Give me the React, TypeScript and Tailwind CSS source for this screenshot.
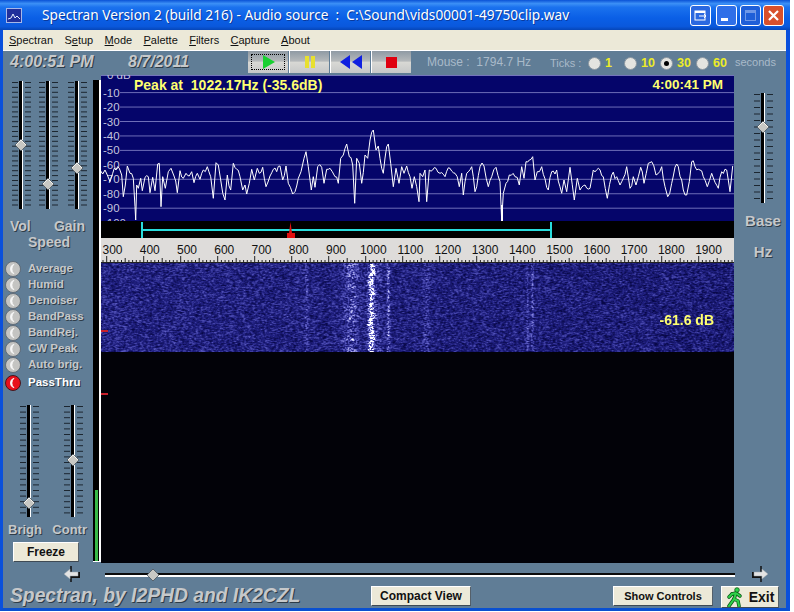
import * as React from "react";

// eyeballed trace points, [x, y] in absolute page pixels
const leftTrace = [0,300,8,312,15,300,22,315,30,335,38,310,48,300,58,295,65,315,70,380,76,345,82,288,90,310,100,325,105,410,107,450,110,345,115,355,122,325,127,362,135,322,145,320,150,368,158,322,165,362,173,282,178,280,183,410,188,320,196,355,205,305,213,295,222,318,232,368,240,302,250,325,258,310,268,318,275,305,282,338,292,310,300,328,310,300,322,290,332,320,340,385,348,278,355,285,362,330,375,390,382,315,392,360,400,280,410,298,420,320,428,360,435,345,440,372,448,340,455,298,463,330,472,295,478,310,488,292,498,350,510,318,520,298,530,305,540,288,548,330,558,288,565,340,578,372,585,365,595,325,603,305,612,265,618,245,625,290,634,360,640,320,645,352,653,290,665,292,672,340,680,298,690,295,697,305,705,320,715,340,722,265,730,255,740,222,748,260,758,285,764,400,770,265,778,280,785,340,795,255,803,265,810,210,820,180,828,240,835,228,845,295,850,310,860,230,865,222,872,280,880,350,888,295,897,340,905,290,912,310,920,288,930,320,936,355,943,320,950,350,957,395];
const rightTrace = [0,310,8,320,15,300,20,395,28,300,38,300,48,295,60,310,75,320,90,295,105,310,118,350,125,310,130,375,140,310,155,290,165,365,180,290,192,288,205,350,215,320,228,292,240,335,245,452,250,370,258,340,268,315,285,320,298,345,305,290,312,325,318,275,328,270,338,260,345,330,352,305,365,290,385,360,395,305,410,300,425,370,432,330,440,365,450,292,463,390,472,325,480,360,495,345,510,355,520,300,535,295,550,320,562,385,575,315,590,320,600,345,620,290,630,355,640,320,648,345,662,292,672,340,685,280,695,275,708,315,725,290,735,350,743,380,755,340,770,282,785,330,790,360,800,375,808,335,815,275,825,290,840,300,850,320,862,350,875,310,895,355,905,305,920,300,930,365,938,288];

function tracePoints() {
  const raw: [number, number][] = [];
  for (let i = 0; i < leftTrace.length; i += 2) raw.push([leftTrace[i] / 3 - 1, leftTrace[i + 1] / 3 - 5]);
  for (let i = 0; i < rightTrace.length; i += 2) raw.push([rightTrace[i] / 3 + 319, rightTrace[i + 1] / 3 - 5]);
  // the real trace is denser than the hand-read points, so add small wiggles between them
  let seed = 77;
  const rnd = () => {
    seed = (seed * 16807) % 2147483647;
    return seed / 2147483647;
  };
  const out: string[] = [];
  raw.forEach(([x, y], i) => {
    out.push(`${x.toFixed(1)},${y.toFixed(1)}`);
    const next = raw[i + 1];
    if (!next) return;
    const steps = Math.floor((next[0] - x) / 1.6);
    for (let s = 1; s < steps; s++) {
      const f = s / steps;
      const py = y + (next[1] - y) * f + (rnd() - 0.5) * 7;
      out.push(`${(x + (next[0] - x) * f).toFixed(1)},${py.toFixed(1)}`);
    }
  });
  return out.join(" ");
}

const menus = ["Spectran", "Setup", "Mode", "Palette", "Filters", "Capture", "About"];
const underlineAt: Record<string, number> = { Spectran: 0, Setup: 1, Mode: 0, Palette: 0, Filters: 0, Capture: 0, About: 0 };
const filters = ["Average", "Humid", "Denoiser", "BandPass", "BandRej.", "CW Peak", "Auto brig."];
const labelText = "font-bold text-[#c6c8ca] [text-shadow:1px_1px_0_#2e3c48]";

function VSlider({ height, thumb, spacing, mark = 13 }: { height: number; thumb: number; spacing: number; mark?: number }) {
  const ticks: number[] = [];
  for (let y = 1; y < height; y += spacing) ticks.push(y);
  return (
    <svg width={26} height={height} className="block shrink-0">
      {ticks.map((y) => (
        <g key={y} stroke="#1c2630" strokeWidth="1">
          <line x1={mark - 9} x2={mark - 3} y1={y + 0.5} y2={y + 0.5} />
          <line x1={mark + 4} x2={mark + 10} y1={y + 0.5} y2={y + 0.5} />
        </g>
      ))}
      <rect x={mark - 2} y={0} width={3} height={height} fill="#000" />
      <rect x={mark + 1} y={0} width={1} height={height} fill="#fff" />
      <polygon points={`${mark},${thumb - 6} ${mark + 6},${thumb} ${mark},${thumb + 6} ${mark - 6},${thumb}`} fill="#c8c8c4" stroke="#3c4650" strokeWidth="0.7" />
      <polyline points={`${mark - 5},${thumb} ${mark},${thumb - 5} ${mark + 5},${thumb}`} fill="none" stroke="#f4f4f0" strokeWidth="1" />
    </svg>
  );
}

function Led({ on = false }: { on?: boolean }) {
  return (
    <svg width={16} height={16} className="block shrink-0">
      <circle cx="8" cy="8" r="7.5" fill={on ? "#e8101c" : "#c4c4c2"} stroke={on ? "#30090c" : "#55606a"} strokeWidth="0.8" />
      <path d="M9 3.2 A5 5 0 0 0 9 12.8 A6.5 6.5 0 0 1 9 3.2 Z" fill="#f8f8f8" stroke="#f8f8f8" strokeWidth="0.8" />
    </svg>
  );
}

function Radio({ on = false }: { on?: boolean }) {
  return (
    <div className="flex h-[13px] w-[13px] shrink-0 items-center justify-center rounded-full border border-[#8a96a0] bg-[#e4e4e0]">
      {on && <div className="h-[5px] w-[5px] rounded-full bg-black" />}
    </div>
  );
}

function TransportButton({ focus, first, children }: { focus?: boolean; first?: boolean; children: React.ReactNode }) {
  return (
    <div className={`relative flex h-[22px] w-[40px] items-center justify-center bg-[linear-gradient(180deg,#8f9aa4_0%,#b4b8ba_45%,#d8d8d4_52%,#c6c8c8_100%)] ${first ? "" : "ml-[1px] border-l border-white"}`}>
      {focus && <div className="absolute inset-x-[3px] inset-y-[3px] border border-dotted border-black" />}
      {children}
    </div>
  );
}

function TitleButton({ className, children }: { className: string; children: React.ReactNode }) {
  return <div className={`flex h-[21px] w-[21px] items-center justify-center rounded-[3px] border border-white ${className}`}>{children}</div>;
}

function XpButton({ className, children }: { className: string; children: React.ReactNode }) {
  return (
    <div className={`flex items-center justify-center border-t border-l border-white border-r border-b border-r-[#55606a] border-b-[#3f4a54] bg-[#ece9d8] font-bold text-[#111] ${className}`}>
      {children}
    </div>
  );
}

function Spectrum() {
  const dbs = ["0 dB", "-10", "-20", "-30", "-40", "-50", "-60", "-70", "-80", "-90", "-100"];
  return (
    <div className="relative h-[146px] w-[633px] overflow-hidden bg-[#05056a]">
      <svg width={633} height={146} className="block">
        <line x1={0} x2={633} y1={0.5} y2={0.5} stroke="#7474bc" />
        {dbs.map((d, i) => {
          const y = i === 0 ? 0 : 17.6 + (i - 1) * 14.45;
          return (
            <g key={d}>
              {i > 0 && i < 10 && <line x1={19} x2={633} y1={y} y2={y} stroke="#6e6eb8" strokeWidth="1" />}
              <text x={i === 0 ? 6 : 2} y={y + 4} fontSize="11.5" fill="#c4c4de">{d}</text>
            </g>
          );
        })}
        <polyline points={tracePoints()} fill="none" stroke="#fff" strokeWidth="1" strokeLinejoin="bevel" />
        <rect x={400} y={130} width={2} height={16} fill="#fff" />
      </svg>
      <div className="absolute left-[33px] top-[2px] whitespace-pre text-[14px] font-bold leading-[16px] text-[#ffff70]">Peak at  1022.17Hz (-35.6dB)</div>
      <div className="absolute right-[11px] top-[2px] text-[13.5px] font-bold leading-[16px] text-[#ffff70]">4:00:41 PM</div>
    </div>
  );
}

function Markers() {
  return (
    <svg width={633} height={17} className="block bg-black">
      <rect x={41} y={8} width={409} height={2} fill="#28dcdc" />
      <rect x={40} y={1} width={2} height={16} fill="#28dcdc" />
      <rect x={449} y={1} width={2} height={16} fill="#28dcdc" />
      <polygon points="189.5,1 191,12 194,12 194,17 186,17 186,12 188,12" fill="#e01010" />
    </svg>
  );
}

function Ruler() {
  const ticks: React.ReactNode[] = [];
  for (let f = 290; f <= 1990; f += 10) {
    const x = 5.7 + ((f - 300) * 37) / 100;
    if (x > 633) break;
    const h = f % 100 === 0 ? 6 : f % 50 === 0 ? 4 : 2;
    ticks.push(<line key={f} x1={x} x2={x} y1={24 - h} y2={24} stroke="#222" strokeWidth="1" />);
  }
  return (
    <svg width={633} height={25} className="block bg-[#dedcda]">
      {Array.from({ length: 17 }).map((_, i) => (
        <text key={i} x={11.5 + 37.25 * i} y={16} fontSize="12" fill="#111" textAnchor="middle">{300 + i * 100}</text>
      ))}
      {ticks}
      <line x1={0} x2={633} y1={24.5} y2={24.5} stroke="#222" />
    </svg>
  );
}

function Waterfall() {
  const ref = React.useRef<HTMLCanvasElement>(null);
  React.useEffect(() => {
    const ctx = ref.current?.getContext("2d");
    if (!ctx) return;
    const W = 633, H = 89;
    let seed = 1234567;
    const rnd = () => {
      seed = (seed + 0x6d2b79f5) | 0;
      let t = Math.imul(seed ^ (seed >>> 15), 1 | seed);
      t = (t + Math.imul(t ^ (t >>> 7), 61 | t)) ^ t;
      return ((t ^ (t >>> 14)) >>> 0) / 4294967296;
    };
    const noise = new Float32Array(W * H).map(() => rnd());
    const at = (x: number, y: number) => noise[Math.min(y, H - 1) * W + Math.min(Math.max(x, 0), W - 1)];
    const img = ctx.createImageData(W, H);
    const lerp = (a: number, b: number, t: number) => a + (b - a) * t;
    const stops = [[0, 8, 8, 72], [0.3, 32, 32, 128], [0.6, 88, 88, 192], [0.85, 176, 176, 238], [1, 255, 255, 255]];
    // line = [x, width, strength]
    const lines = [[205, 1.2, 0.18], [426, 1, 0.16], [431, 1.1, 0.26], [287, 1.2, 0.3], [325, 2.5, 0.14], [278, 3, 0.1]];
    for (let y = 0; y < H; y++) {
      const wobble = Math.sin(y * 0.28) * 1.2;
      const rowAmp = 0.25 + rnd() * 0.75;
      // the wide band at 950 Hz comes and goes in clumps
      const clump = 0.16 + 0.14 * Math.abs(Math.sin(y * 0.09 + 0.4)) + 0.08 * Math.sin(y * 0.6);
      for (let x = 0; x < W; x++) {
        const n = at(x, y) * 0.4 + at(x - 1, y) * 0.22 + at(x + 1, y) * 0.22 + at(x, y + 1) * 0.16;
        let e = 0;
        for (const [lx, lw, ls] of lines) e += ls * Math.exp(-((x - lx) ** 2) / (2 * lw * lw));
        e += clump * Math.exp(-((x - 250) ** 2) / 60);
        e += 0.2 * Math.exp(-((x - 270) ** 2) / 30);
        e += 0.85 * rowAmp * Math.exp(-((x - 270 - wobble) ** 2) / 7);
        const v = Math.min(1, Math.max(0, 0.24 + 0.06 * (1 - x / W) + (n - 0.5) * 0.7 + e * (0.4 + at(x, y))));
        let k = 0;
        while (k < stops.length - 2 && v > stops[k + 1][0]) k++;
        const t = (v - stops[k][0]) / (stops[k + 1][0] - stops[k][0]);
        const p = (y * W + x) * 4;
        img.data[p] = lerp(stops[k][1], stops[k + 1][1], t);
        img.data[p + 1] = lerp(stops[k][2], stops[k + 1][2], t);
        img.data[p + 2] = lerp(stops[k][3], stops[k + 1][3], t);
        img.data[p + 3] = 255;
      }
    }
    ctx.putImageData(img, 0, 0);
  }, []);
  return <canvas ref={ref} width={633} height={89} className="block" />;
}

function PointerArrow({ flip = false }: { flip?: boolean }) {
  return (
    <svg width={18} height={18} viewBox="0 0 18 18" className={`block ${flip ? "-scale-x-100" : ""}`}>
      <path d="M8 1 V17" stroke="#111" strokeWidth="1.5" />
      <path d="M8 12 H16 V7" stroke="#111" strokeWidth="2" fill="none" />
      <path d="M1 9 L7 4 V7 H15 V11 H7 V14 Z" fill="#e4e4e4" stroke="#9aa4ac" strokeWidth="0.5" />
    </svg>
  );
}

function Runner() {
  return (
    <svg width={18} height={20} viewBox="0 0 18 20" className="block shrink-0">
      <g fill="none" stroke="#0b5a18" strokeWidth="3.6" strokeLinecap="round" strokeLinejoin="round">
        <path d="M6 7 L10 6 L8 12 L3 19" />
        <path d="M8 12 L12 14 L13 19" />
        <path d="M10 6 L14 9 M6 7 L3 10" />
      </g>
      <g fill="none" stroke="#2fd24a" strokeWidth="2" strokeLinecap="round" strokeLinejoin="round">
        <path d="M6 7 L10 6 L8 12 L3 19" />
        <path d="M8 12 L12 14 L13 19" />
        <path d="M10 6 L14 9 M6 7 L3 10" />
      </g>
      <circle cx="11" cy="3" r="2.3" fill="#2fd24a" stroke="#0b5a18" strokeWidth="0.8" />
    </svg>
  );
}

export default function App() {
  return (
    <div className="flex h-[611px] w-[790px] flex-col overflow-hidden bg-white [font-family:'Liberation_Sans',Arial,sans-serif]">
      {/* Title bar */}
      <div className="flex h-[30px] shrink-0 items-center bg-[linear-gradient(180deg,#0a52d6_0%,#3c90f6_12%,#1b72ee_24%,#0a5fe6_60%,#0a58dc_88%,#0646b8_100%)] pr-[6px]">
        <svg width={16} height={15} className="ml-[6px] block shrink-0">
          <rect x="0.5" y="0.5" width="15" height="14" fill="#20309c" stroke="#a8b8e8" />
          <polyline points="2,11 5,10 7,6 9,10 11,8 14,11" fill="none" stroke="#e8f0ff" />
        </svg>
        <div className="ml-[20px] whitespace-pre text-[13.7px] leading-none text-white [font-family:'Noto_Sans',sans-serif] [text-shadow:1px_1px_0_#0a3a9c]">Spectran Version 2 (build 216) - Audio source  :  C:\Sound\vids00001-49750clip.wav</div>
        <div className="ml-auto flex items-center">
          <TitleButton className="bg-[#2a68e0]">
            <svg width={13} height={13}>
              <rect x="1" y="2" width="10" height="9" fill="none" stroke="#fff" />
              <rect x="1" y="2" width="10" height="2" fill="#fff" />
              <path d="M5 7 H12 M10 5 L12 7 L10 9" stroke="#fff" fill="none" />
            </svg>
          </TitleButton>
          <TitleButton className="ml-[5px] bg-[#2f6fe8]">
            <div className="mt-[9px] mr-[5px] h-[3px] w-[7px] bg-white" />
          </TitleButton>
          <TitleButton className="ml-[3px] border-[#5f8ee6] bg-[#1f5fd8]">
            <div className="h-[11px] w-[11px] border border-t-[3px] border-[#6f98e8]" />
          </TitleButton>
          <TitleButton className="ml-[2px] w-[20px] bg-[#d8502c]">
            <svg width={13} height={13}>
              <path d="M2 2 L11 11 M11 2 L2 11" stroke="#fff" strokeWidth="2.2" />
            </svg>
          </TitleButton>
        </div>
      </div>

      {/* Window body */}
      <div className="flex min-h-0 flex-1 flex-col border-x-[3px] border-b-[3px] border-r-[4px] border-x-[#0a50dc] border-b-[#0a50d0] bg-[#607d96]">
        <div className="flex h-[20px] shrink-0 items-center bg-[#ece9d8] pl-[6px] text-[11px] text-[#111]">
          {menus.map((m) => (
            <div key={m} className="mr-[11.4px]">
              {m.slice(0, underlineAt[m])}
              <span className="underline">{m[underlineAt[m]]}</span>
              {m.slice(underlineAt[m] + 1)}
            </div>
          ))}
        </div>
        <div className="h-px shrink-0 bg-white" />

        {/* Top strip */}
        <div className="flex h-[24px] shrink-0 items-start">
          <div className={`ml-[7px] mt-[2px] w-[118px] text-[16px] italic leading-[18px] ${labelText}`}>4:00:51 PM</div>
          <div className={`mt-[2px] w-[120px] text-[16px] italic leading-[18px] ${labelText}`}>8/7/2011</div>
          <div className="flex w-[163px]">
            <TransportButton focus first>
              <svg width={16} height={16}><polygon points="3,1 15,8 3,15" fill="#18d030" /></svg>
            </TransportButton>
            <TransportButton>
              <svg width={14} height={14}><rect x="2" y="1" width="4" height="12" fill="#e8e030" /><rect x="8" y="1" width="4" height="12" fill="#e8e030" /></svg>
            </TransportButton>
            <TransportButton>
              <svg width={26} height={14}><polygon points="12,0 12,14 2,7" fill="#1020e0" /><polygon points="24,0 24,14 14,7" fill="#1020e0" /></svg>
            </TransportButton>
            <TransportButton>
              <svg width={11} height={11}><rect width="11" height="11" fill="#e00010" /></svg>
            </TransportButton>
          </div>
          <div className="ml-[16px] mt-[4px] w-[123px] whitespace-pre text-[12px] leading-[14px] text-[#a9bac9]">Mouse :  1794.7 Hz</div>
          <div className="mt-[5px] w-[38px] text-[11px] leading-[14px] text-[#a9bac9]">Ticks :</div>
          {[["1", false], ["10", false], ["30", true], ["60", false]].map(([n, on]) => (
            <div key={n as string} className="mt-[5px] flex w-[36px] items-center">
              <Radio on={on as boolean} />
              <span className="ml-[4px] text-[12.5px] font-bold leading-[14px] text-[#ecec28]">{n as string}</span>
            </div>
          ))}
          <div className="ml-[3px] mt-[4px] text-[11px] leading-[14px] text-[#a9bac9]">seconds</div>
        </div>

        {/* Main row */}
        <div className="flex h-[488px] shrink-0">
          <div className="flex w-[90px] shrink-0 flex-col">
            <div className="ml-[5px] mt-[6px] flex">
              <VSlider height={128} spacing={4.9} thumb={64} />
              <div className="ml-px"><VSlider height={128} spacing={4.9} thumb={103} /></div>
              <div className="ml-[3px]"><VSlider height={128} spacing={4.9} thumb={87} /></div>
            </div>
            <div className={`ml-[7px] mt-[9px] flex w-[75px] justify-between text-[14px] leading-[16px] ${labelText}`}>
              <span>Vol</span>
              <span>Gain</span>
            </div>
            <div className={`ml-[25px] text-[14px] leading-[16px] ${labelText}`}>Speed</div>
            <div className="mt-[11px] flex flex-col">
              {filters.map((f) => (
                <div key={f} className="flex h-[16px] items-center pl-[2px]">
                  <Led />
                  <span className={`ml-[7px] text-[11.5px] leading-none ${labelText}`}>{f}</span>
                </div>
              ))}
              <div className="mt-[2px] flex h-[16px] items-center pl-[2px]">
                <Led on />
                <span className="ml-[7px] text-[11.5px] font-bold leading-none text-white [text-shadow:1px_1px_0_#2e3c48]">PassThru</span>
              </div>
            </div>
            <div className="ml-[13px] mt-[14px] flex">
              <VSlider height={112} spacing={5.6} thumb={98} />
              <div className="ml-[18px]"><VSlider height={112} spacing={5.6} thumb={55} /></div>
            </div>
            <div className={`ml-[5px] mt-[5px] flex w-[79px] justify-between text-[13px] leading-[16px] ${labelText}`}>
              <span>Brigh</span>
              <span>Contr</span>
            </div>
            <XpButton className="ml-[10px] mt-[4px] h-[20px] w-[66px] text-[12px]">Freeze</XpButton>
          </div>

          {/* Level meter */}
          <div className="mt-[5px] mb-px flex w-[8px] shrink-0 flex-col justify-end border-r-2 border-b border-white bg-black">
            <div className="ml-[2px] h-[71px] w-[3px] bg-[#38b848]" />
          </div>

          {/* Display */}
          <div className="flex w-[633px] shrink-0 flex-col bg-[#020208]">
            <Spectrum />
            <Markers />
            <Ruler />
            <div className="relative">
              <Waterfall />
              <div className="absolute left-0 top-[67px] h-[2px] w-[7px] bg-[#c8202c]" />
              <div className="absolute left-0 top-[130px] h-[2px] w-[7px] bg-[#c8202c]" />
              <div className="absolute right-[20px] top-[50px] text-[14px] font-bold leading-[14px] text-[#ffff70]">-61.6 dB</div>
            </div>
          </div>

          {/* Base slider */}
          <div className="flex w-[52px] shrink-0 flex-col items-center pl-[6px]">
            <div className="mt-[18px]"><VSlider height={110} spacing={6.5} thumb={34} /></div>
            <div className={`mt-[9px] text-[15px] leading-[17px] ${labelText}`}>Base</div>
            <div className={`mt-[14px] text-[15px] leading-[17px] ${labelText}`}>Hz</div>
          </div>
        </div>

        {/* Slider row */}
        <div className="flex h-[22px] shrink-0 items-center">
          <div className="ml-[60px]"><PointerArrow /></div>
          <svg width={631} height={14} className="ml-[24px] block shrink-0">
            <rect x="0" y="6" width="630" height="2" fill="#0a0a0a" />
            <rect x="0" y="8" width="630" height="2" fill="#fff" />
            <polygon points="48,2 54,8 48,14 42,8" fill="#c8c8c4" stroke="#3c4650" strokeWidth="0.7" />
          </svg>
          <div className="ml-[15px]"><PointerArrow flip /></div>
        </div>

        {/* Footer */}
        <div className="flex min-h-0 flex-1 items-start">
          <div className={`ml-[7px] mt-0 w-[361px] whitespace-nowrap text-[19.3px] italic leading-[22px] ${labelText}`}>Spectran, by I2PHD and IK2CZL</div>
          <XpButton className="mt-px h-[20px] w-[100px] text-[12px]">Compact View</XpButton>
          <XpButton className="ml-[142px] mt-px h-[20px] w-[100px] text-[11px]">Show Controls</XpButton>
          <XpButton className="ml-[8px] mt-px h-[22px] w-[58px] gap-[5px] text-[14px]">
            <Runner />
            <span>Exit</span>
          </XpButton>
        </div>
      </div>
    </div>
  );
}
